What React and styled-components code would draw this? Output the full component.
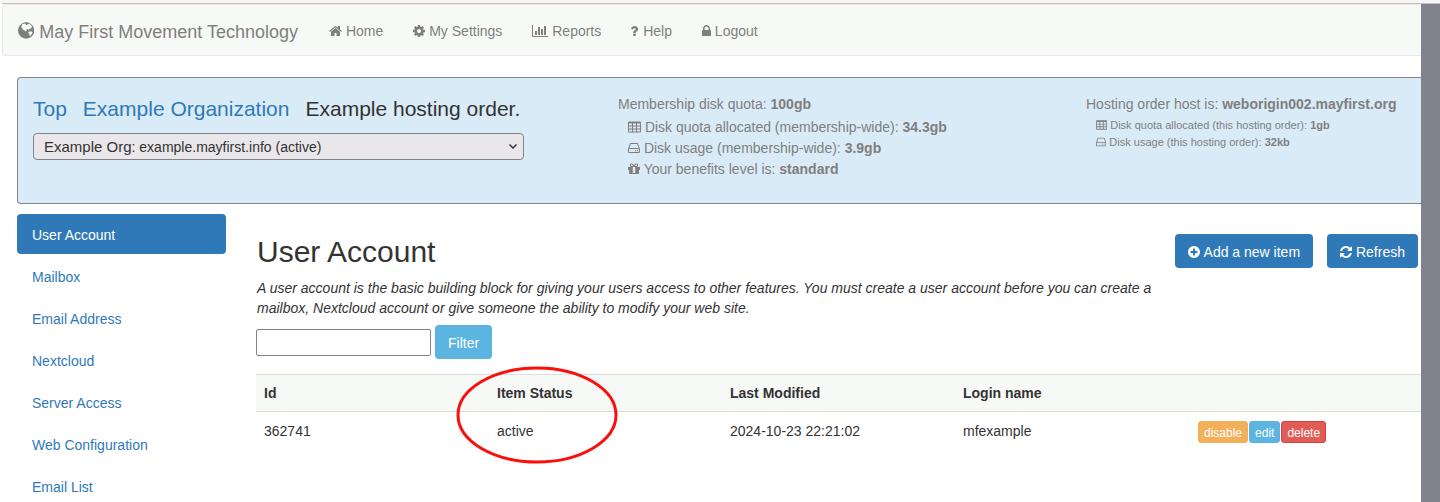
import styled, { createGlobalStyle } from "styled-components";

const GlobalStyle = createGlobalStyle`
  * {
    box-sizing: border-box;
  }
  body {
    margin: 0;
    background: #fff;
    color: #333;
    font-family: "Liberation Sans", Arial, sans-serif;
    font-size: 14px;
    line-height: 20px;
  }
  a {
    color: #2f79b9;
    text-decoration: none;
  }
`;

const icons = {
  globe:
    "M896 128q209 0 385.500 103t279.500 279.500 103 385.500-103 385.500-279.500 279.500-385.500 103-385.500-103-279.500-279.500-103-385.500 103-385.500 279.500-279.500 385.500-103zM520 310L780 230L860 330L940 400L1020 300L1180 260L1400 430L1470 600L1340 650L1250 760L1120 820L1010 760L900 830L960 930L860 990L720 880L600 830L520 690L440 560zM1140 1010L1330 960L1500 1040L1450 1210L1290 1400L1170 1370L1210 1220L1110 1130z",
  home: "M1472 992v480q0 26-19 45t-45 19h-384v-384h-256v384h-384q-26 0-45-19t-19-45v-480q0-1 .5-3t.5-3l575-474 575 474q1 2 1 6zm223-69l-62 74q-8 9-21 11h-3q-13 0-21-7l-692-577-692 577q-12 8-24 7-13-2-21-11l-62-74q-8-10-7-23.500t11-21.500l719-599q32-26 76-26t76 26l244 204v-195q0-14 9-23t23-9h192q14 0 23 9t9 23v408l219 182q10 8 11 21.500t-7 23.500z",
  cog: "M1152 896q0-106-75-181t-181-75-181 75-75 181 75 181 181 75 181-75 75-181zm512-109v222q0 12-8 23t-20 13l-185 28q-19 54-39 91 35 50 107 138 10 12 10 25t-9 23q-27 37-99 108t-94 71q-12 0-26-9l-138-108q-44 23-91 38-16 136-29 186-7 28-36 28h-222q-14 0-24.500-8.500t-11.500-21.500l-28-184q-49-16-90-37l-141 107q-10 9-25 9-14 0-25-11-126-114-165-168-7-10-7-23 0-12 8-23 15-21 51-66.500t54-70.500q-27-50-41-99l-183-27q-13-2-21-12.500t-8-23.500v-222q0-12 8-23t19-13l186-28q14-46 39-92-40-57-107-138-10-12-10-24 0-10 9-23 26-36 98.500-107.500t94.500-71.500q13 0 26 10l138 107q44-23 91-38 16-136 29-186 7-28 36-28h222q14 0 24.500 8.500t11.500 21.500l28 184q49 16 90 37l142-107q9-9 24-9 13 0 25 10 129 119 165 170 7 8 7 22 0 12-8 23-15 21-51 66.500t-54 70.500q26 50 41 98l183 28q13 2 21 12.500t8 23.500z",
  chart:
    "M640 896v512h-256v-512h256zm384-512v1024h-256v-1024h256zm1024 1152v128h-2048v-1536h128v1408h1920zm-640-896v768h-256v-768h256zm384-384v1152h-256v-1152h256z",
  question:
    "M704 1256v240q0 16-12 28t-28 12h-240q-16 0-28-12t-12-28v-240q0-16 12-28t28-12h240q16 0 28 12t12 28zm316-600q0 54-15.500 101t-35 76.500-55 59.500-57.500 43.500-61 35.500q-41 23-68.500 65t-27.500 67q0 17-12 32.500t-28 15.500h-240q-15 0-25.500-18.500t-10.500-37.500v-45q0-83 65-156.500t143-108.500q59-27 84-56t25-76q0-42-46.500-74t-107.500-32q-65 0-108 29-35 25-107 115-13 16-31 16-12 0-25-8l-164-125q-13-10-15.500-25t5.500-28q160-266 464-266 80 0 161 31t146 83 106 127.500 41 158.500z",
  lock: "M320 768h512v-192q0-106-75-181t-181-75-181 75-75 181v192zm832 96v576q0 40-28 68t-68 28h-960q-40 0-68-28t-28-68v-576q0-40 28-68t68-28h32v-192q0-184 132-316t316-132 316 132 132 316v192h32q40 0 68 28t28 68z",
  table:
    "M160 256h1344q66 0 113 47t47 113v1088q0 66-47 113t-113 47h-1344q-66 0-113-47t-47-113v-1088q0-66 47-113t113-47zM128 512v256h384v-256zM640 512v256h384v-256zM1152 512v256h384v-256zM128 896v256h384v-256zM640 896v256h384v-256zM1152 896v256h384v-256zM128 1280v256h384v-256zM640 1280v256h384v-256zM1152 1280v256h384v-256z",
  disk: "M1168 1216q0 33-23.500 56.500t-56.500 23.500-56.500-23.500-23.500-56.500 23.500-56.500 56.500-23.500 56.500 23.500 23.500 56.500zm256 0q0 33-23.500 56.500t-56.500 23.500-56.500-23.500-23.500-56.500 23.500-56.500 56.500-23.500 56.500 23.500 23.500 56.500zm112 160v-320q0-13-9.500-22.500t-22.500-9.500h-1216q-13 0-22.500 9.500t-9.500 22.500v320q0 13 9.500 22.500t22.500 9.500h1216q13 0 22.500-9.500t9.500-22.500zm-1230-480h1180l-157-482q-4-13-16-21.500t-26-8.500h-782q-14 0-26 8.500t-16 21.500zm1358 160v320q0 66-47 113t-113 47h-1216q-66 0-113-47t-47-113v-320q0-25 16-75l197-606q17-53 63-86t101-33h782q55 0 101 33t63 86l197 606q16 50 16 75z",
  gift: "M1056 1356v-716h-320v716q0 25 18 38.500t46 13.500h192q28 0 46-13.500t18-38.500zm-456-844h195l-126-161q-26-31-69-31-40 0-68 28t-28 68 28 68 68 28zm688-96q0-40-28-68t-68-28q-43 0-69 31l-125 161h194q40 0 68-28t28-68zm376 256v320q0 14-9 23t-23 9h-96v416q0 40-28 68t-68 28h-1088q-40 0-68-28t-28-68v-416h-96q-14 0-23-9t-9-23v-320q0-14 9-23t23-9h440q-93 0-158.500-65.500t-65.500-158.500 65.500-158.500 158.500-65.500q107 0 168 77l128 165 128-165q61-77 168-77 93 0 158.500 65.500t65.500 158.500-65.500 158.500-158.500 65.500h440q14 0 23 9t9 23z",
  plus: "M1344 960v-128q0-26-19-45t-45-19h-256v-256q0-26-19-45t-45-19h-128q-26 0-45 19t-19 45v256h-256q-26 0-45 19t-19 45v128q0 26 19 45t45 19h256v256q0 26 19 45t45 19h128q26 0 45-19t19-45v-256h256q26 0 45-19t19-45zm320-64q0 209-103 385.500t-279.500 279.500-385.500 103-385.500-103-279.500-279.500-103-385.500 103-385.500 279.500-279.500 385.500-103 385.500 103 279.500 279.500 103 385.500z",
  refresh:
    "M1639 1056q0 5-1 7-64 268-268 434.500t-478 166.500q-146 0-282.500-55t-243.500-157l-129 129q-19 19-45 19t-45-19-19-45v-448q0-26 19-45t45-19h448q26 0 45 19t19 45-19 45l-137 137q71 66 161 102t187 36q134 0 250-65t186-179q11-17 53-117 8-23 30-23h192q13 0 22.500 9.500t9.500 22.500zm25-800v448q0 26-19 45t-45 19h-448q-26 0-45-19t-19-45 19-45l138-138q-148-137-349-137-134 0-250 65t-186 179q-11 17-53 117-8 23-30 23h-199q-13 0-22.500-9.500t-9.500-22.500v-7q65-268 270-434.500t480-166.500q146 0 284 55.500t245 156.500l130-129q19-19 45-19t45 19 19 45z",
};

const viewBoxes = {
  chart: "0 0 2048 1792",
  question: "100 0 1024 1792",
  lock: "0 0 1152 1792",
  table: "0 64 1664 1792",
  home: "64 0 1664 1792",
};

const Icon = ({ name, size = 14 }) => (
  <Glyph viewBox={viewBoxes[name] || "128 0 1536 1792"} $size={size} aria-hidden="true">
    <path fillRule="evenodd" d={icons[name]} />
  </Glyph>
);

const navLinks = [
  { icon: "home", label: "Home" },
  { icon: "cog", label: "My Settings" },
  { icon: "chart", label: "Reports" },
  { icon: "question", label: "Help" },
  { icon: "lock", label: "Logout" },
];

const services = [
  "User Account",
  "Mailbox",
  "Email Address",
  "Nextcloud",
  "Server Access",
  "Web Configuration",
  "Email List",
];

const NavBar = () => (
  <Nav>
    <Brand href="#">
      <Icon name="globe" size={19} /> May First Movement Technology
    </Brand>
    <NavList>
      {navLinks.map((link) => (
        <li key={link.label}>
          <NavLink href="#">
            <Icon name={link.icon} /> {link.label}
          </NavLink>
        </li>
      ))}
    </NavList>
  </Nav>
);

const OrderPanel = () => (
  <Panel>
    <OrderColumn>
      <Crumbs>
        <a href="#">Top</a>
        <a href="#">Example Organization</a>
        <span>Example hosting order.</span>
      </Crumbs>
      <SelectBox>
        <OrderSelect aria-label="Hosting order">
          <button type="button">
            <Chosen>
              <big>Example Org</big>: example.mayfirst.info (active)
            </Chosen>
          </button>
          <option>Example Org: example.mayfirst.info (active)</option>
        </OrderSelect>
        <Chevron viewBox="0 0 8 5" aria-hidden="true">
          <path d="M0.500 0.500 4 4 7.500 0.500" />
        </Chevron>
      </SelectBox>
    </OrderColumn>
    <QuotaColumn>
      <div>
        Membership disk quota: <b>100gb</b>
      </div>
      <QuotaList>
        <li>
          <Icon name="table" /> Disk quota allocated (membership-wide): <b>34.3gb</b>
        </li>
        <li>
          <Icon name="disk" /> Disk usage (membership-wide): <b>3.9gb</b>
        </li>
        <li>
          <Icon name="gift" /> Your benefits level is: <b>standard</b>
        </li>
      </QuotaList>
    </QuotaColumn>
    <HostColumn>
      <div>
        Hosting order host is: <b>weborigin002.mayfirst.org</b>
      </div>
      <QuotaList $small>
        <li>
          <Icon name="table" size={12} /> Disk quota allocated (this hosting order): <b>1gb</b>
        </li>
        <li>
          <Icon name="disk" size={12} /> Disk usage (this hosting order): <b>32kb</b>
        </li>
      </QuotaList>
    </HostColumn>
  </Panel>
);

const AccountTable = () => (
  <Table>
    <thead>
      <tr>
        <th scope="col">Id</th>
        <th scope="col">Item Status</th>
        <th scope="col">Last Modified</th>
        <th scope="col">Login name</th>
        <th aria-label="Actions" />
      </tr>
    </thead>
    <tbody>
      <tr>
        <td>362741</td>
        <td>
          <Marked>
            active
            <Ring viewBox="0 0 162 98" aria-hidden="true">
              <ellipse cx="81" cy="49" rx="79" ry="47" />
            </Ring>
          </Marked>
        </td>
        <td>2024-10-23 22:21:02</td>
        <td>mfexample</td>
        <td>
          <Actions>
            <SmallButton $bg="#f3b05a">disable</SmallButton>
            <SmallButton $bg="#5bb5e0">edit</SmallButton>
            <SmallButton $bg="#e25c57" $border="#d43f3a">
              delete
            </SmallButton>
          </Actions>
        </td>
      </tr>
    </tbody>
  </Table>
);

const App = () => (
  <Page>
    <GlobalStyle />
    <TopEdge />
    <Body>
      <Screen>
        <NavBar />
        <Content>
          <OrderPanel />
          <Columns>
            <SideNav>
              {services.map((name, index) => (
                <SideLink href="#" key={name} $active={index === 0}>
                  {name}
                </SideLink>
              ))}
            </SideNav>
            <Main>
              <Heading>
                <Intro>
                  <h1>User Account</h1>
                  <p>
                    A user account is the basic building block for giving your users access to
                    other features. You must create a user account before you can create a
                    mailbox, Nextcloud account or give someone the ability to modify your web site.
                  </p>
                </Intro>
                <Toolbar>
                  <Button $bg="#2f79b9">
                    <Icon name="plus" /> Add a new item
                  </Button>
                  <Button $bg="#2f79b9">
                    <Icon name="refresh" /> Refresh
                  </Button>
                </Toolbar>
              </Heading>
              <FilterForm onSubmit={(e) => e.preventDefault()}>
                <input type="text" aria-label="Filter items" />
                <Button $bg="#5bb5e0">Filter</Button>
              </FilterForm>
              <AccountTable />
            </Main>
          </Columns>
        </Content>
      </Screen>
      <Gutter />
    </Body>
  </Page>
);

const Glyph = styled.svg`
  height: ${(props) => props.$size}px;
  width: auto;
  fill: currentColor;
  vertical-align: -2px;
`;

const Page = styled.div`
  display: flex;
  flex-direction: column;
  height: 100vh;
  overflow: hidden;
`;

const TopEdge = styled.div`
  flex: none;
  height: 4px;
  margin-left: 2px;
  background: #f6f6f6;
  border-bottom: 1px solid #c8c0c0;
`;

const Body = styled.div`
  display: flex;
  flex: 1;
  min-height: 0;
`;

const Screen = styled.div`
  flex: 1;
  min-width: 0;
  padding-left: 2px;
`;

const Gutter = styled.div`
  width: 19px;
  background: #80838c;
`;

const Nav = styled.nav`
  display: flex;
  align-items: center;
  height: 52px;
  padding: 2px 0 0 15px;
  background: #f7f9f6;
  border: 1px solid #e7e7e7;
  border-right: 0;
  border-radius: 4px 0 0 4px;
`;

const Brand = styled.a`
  font-size: 18px;
  color: #7f7f7f;
  padding-right: 16px;
`;

const NavList = styled.ul`
  display: flex;
  margin: 0;
  padding: 0;
  list-style: none;
`;

const NavLink = styled.a`
  color: #7f7f7f;
  padding: 15px;
`;

const Content = styled.div`
  padding: 21px 0 0 15px;
`;

const Panel = styled.section`
  display: grid;
  grid-template-columns: 585px 468px 1fr;
  height: 127px;
  padding: 15px 0 0 15px;
  background: #d9ebf7;
  border: 1px solid #80838c;
  border-right: 0;
  border-radius: 4px 0 0 4px;
`;

const OrderColumn = styled.div`
  padding-right: 94px;
`;

const Crumbs = styled.div`
  display: flex;
  gap: 16px;
  font-size: 21px;
  line-height: 32px;
  white-space: nowrap;
`;

const SelectBox = styled.div`
  position: relative;
  margin-top: 8px;
`;

const OrderSelect = styled.select`
  appearance: none;
  appearance: base-select;
  display: block;
  width: 100%;
  height: 27px;
  min-height: 0;
  padding: 0 10px;
  color: #333;
  font: 14px "Liberation Sans", Arial, sans-serif;
  background: #e9e7ea;
  border: 1px solid #80838c;
  border-radius: 4px;

  &::picker-icon {
    display: none;
  }
`;

const Chosen = styled.span`
  line-height: 25px;

  big {
    font-size: 15px;
  }
`;

const Chevron = styled.svg`
  position: absolute;
  right: 7px;
  top: 11px;
  width: 8px;
  height: 5px;
  overflow: visible;
  fill: none;
  stroke: #333;
  stroke-width: 1.500;
  pointer-events: none;
`;

const QuotaColumn = styled.div`
  padding-top: 1px;
  color: #7f7f7f;
`;

const HostColumn = styled(QuotaColumn)`
  white-space: nowrap;
`;

const QuotaList = styled.ul`
  margin: 0;
  padding: 3px 0 0 10px;
  list-style: none;
  font-size: ${(props) => (props.$small ? 11 : 14)}px;
  line-height: ${(props) => (props.$small ? 17 : 21)}px;
`;

const Columns = styled.div`
  display: flex;
  margin-top: 10px;
`;

const SideNav = styled.nav`
  display: flex;
  flex-direction: column;
  gap: 2px;
  width: 209px;
`;

const SideLink = styled.a`
  padding: 11px 15px 9px;
  border-radius: 4px;
  color: ${(props) => (props.$active ? "#fff" : "#2f79b9")};
  background: ${(props) => (props.$active ? "#2f79b9" : "transparent")};
`;

const Main = styled.main`
  flex: 1;
  margin-left: 30px;
  padding-top: 20px;
`;

const Heading = styled.header`
  display: flex;
  justify-content: space-between;
  padding-right: 3px;
`;

const Intro = styled.div`
  max-width: 902px;
  padding-left: 1px;

  h1 {
    margin: 0;
    font-size: 30px;
    font-weight: 400;
    line-height: 36px;
  }
  p {
    margin: 8px 0 7px;
    font-style: italic;
  }
`;

const Toolbar = styled.div`
  display: flex;
  gap: 14px;
  align-items: flex-start;
`;

const Button = styled.button`
  height: 34px;
  padding: 2px 13px 0;
  border: 0;
  border-radius: 4px;
  color: #fff;
  background: ${(props) => props.$bg};
  font: 14px "Liberation Sans", Arial, sans-serif;
  white-space: nowrap;
`;

const FilterForm = styled.form`
  display: flex;
  align-items: center;
  gap: 4px;

  input {
    width: 175px;
    height: 27px;
    border: 1px solid #80838c;
    border-radius: 2px;
  }
`;

const Table = styled.table`
  width: 100%;
  margin-top: 15px;
  table-layout: fixed;
  border-collapse: collapse;

  th,
  td {
    padding: 8px;
    text-align: left;
    vertical-align: top;
  }
  td {
    padding-top: 9px;
  }
  td:last-child {
    padding-left: 10px;
  }
  thead tr {
    background: #f7f9f6;
    border-top: 1px solid #ddd;
    border-bottom: 1px solid #ddd;
  }
`;

const Marked = styled.span`
  position: relative;
`;

/* hand-drawn highlight over the status column */
const Ring = styled.svg`
  position: absolute;
  left: -41px;
  top: -57px;
  width: 162px;
  height: 98px;
  fill: none;
  stroke: #fb0f0c;
  stroke-width: 3;
  pointer-events: none;
`;

const Actions = styled.div`
  display: flex;
  gap: 1px;
`;

const SmallButton = styled.button`
  height: 22px;
  padding: 1px 5px 0;
  border: 1px solid ${(props) => props.$border || props.$bg};
  border-radius: 3px;
  color: #fff;
  background: ${(props) => props.$bg};
  font: 12px "Liberation Sans", Arial, sans-serif;
`;

export default App;
